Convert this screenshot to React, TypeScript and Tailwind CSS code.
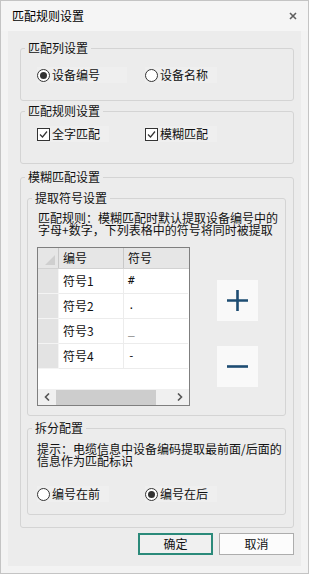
import * as React from "react";

const rows = [
  { name: "符号1", sym: "#" },
  { name: "符号2", sym: "." },
  { name: "符号3", sym: "_" },
  { name: "符号4", sym: "-" },
];

function Radio({ checked }: { checked?: boolean }) {
  return (
    <span className="flex size-[13px] shrink-0 items-center justify-center rounded-full border border-[#333] bg-white">
      {checked && <span className="size-[7px] rounded-full bg-[#333]" />}
    </span>
  );
}

function Check() {
  return (
    <span className="flex size-[13px] shrink-0 items-center justify-center border border-[#333] bg-white">
      <svg width="9" height="9" viewBox="0 0 9 9" fill="none">
        <path d="M1 4.5 L3.5 7 L8 1.5" stroke="#333" strokeWidth="1.2" />
      </svg>
    </span>
  );
}

function Legend({ children }: { children: React.ReactNode }) {
  return <legend className="ml-[4px] px-[3px] leading-[16px]">{children}</legend>;
}

function Option({ checked, box, w, children }: { checked?: boolean; box?: boolean; w: string; children: React.ReactNode }) {
  return (
    <span className={`flex items-center gap-[2px] bg-[#efefef] ${w}`}>
      {box ? <Check /> : <Radio checked={checked} />}
      <span className="leading-[16px]">{children}</span>
    </span>
  );
}

export default function App() {
  return (
    <div className="flex h-[574px] w-[309px] flex-col border border-[#c4c4c4] bg-[#f3f3f3] font-['Noto_Sans_CJK_SC',sans-serif] text-[12px] text-[#111]">
      {/* title bar */}
      <div className="flex h-[30px] shrink-0 items-center justify-between bg-[#f5f5f5] pl-[11px] pr-[11px]">
        <span className="leading-[16px] text-black">匹配规则设置</span>
        <svg width="8" height="8" viewBox="0 0 8 8">
          <path d="M1 1 L7 7 M7 1 L1 7" stroke="#5f5f5f" strokeWidth="1.6" />
        </svg>
      </div>

      <div className="flex flex-1 flex-col px-[7px] pb-[7px]">
        <div className="flex flex-1 flex-col bg-[#ececec] pl-[12px] pr-[7px] pt-[9px]">
          {/* 匹配列设置 */}
          <fieldset className="rounded-[3px] border border-[#d4d4d4] pb-[17px] pt-[11px]">
            <Legend>匹配列设置</Legend>
            <div className="flex h-[16px] items-center pl-[16px]">
              <div className="w-[108px]">
                <Option checked w="w-[90px]">设备编号</Option>
              </div>
              <Option w="w-[72px]">设备名称</Option>
            </div>
          </fieldset>

          {/* 匹配规则设置 */}
          <fieldset className="mt-[2px] rounded-[3px] border border-[#d4d4d4] pb-[21px] pt-[7px]">
            <Legend>匹配规则设置</Legend>
            <div className="flex h-[16px] items-center pl-[16px]">
              <div className="w-[108px]">
                <Option box w="w-[72px]">全字匹配</Option>
              </div>
              <Option box w="w-[72px]">模糊匹配</Option>
            </div>
          </fieldset>

          {/* 模糊匹配设置 */}
          <fieldset className="mt-[5px] rounded-[3px] border border-[#d4d4d4] pb-[12px] pt-[5px]">
            <Legend>模糊匹配设置</Legend>

            <div className="pl-[6px] pr-[7px]">
              <fieldset className="rounded-[3px] border border-[#d4d4d4] pb-[9px] pt-[6px]">
                <Legend>提取符号设置</Legend>
                <div className="pl-[9px]">
                  <p className="pl-[1px] leading-[12px]">
                    <span className="block">匹配规则：模糊匹配时默认提取设备编号中的</span>
                    <span className="block">字母+数字，下列表格中的符号将同时被提取</span>
                  </p>

                  <div className="mt-[11px] flex items-start">
                    {/* table */}
                    <div className="flex h-[159px] w-[153px] flex-col border border-[#7f7f7f] bg-white">
                      <div className="flex h-[21px] shrink-0 border-b border-[#d2d2d2] bg-[#e6e6e6]">
                        <div className="relative w-[21px] border-r border-[#c8c8c8]">
                          <svg className="absolute bottom-[3px] right-[3px]" width="10" height="10" viewBox="0 0 10 10">
                            <path d="M10 0 L10 10 L0 10 Z" fill="#cfcfcf" />
                          </svg>
                        </div>
                        <div className="flex w-[65px] items-center border-r border-[#c8c8c8] pl-[4px]">编号</div>
                        <div className="flex w-[64px] items-center pl-[4px]">符号</div>
                      </div>
                      {rows.map((r) => (
                        <div key={r.name} className="flex h-[25px] shrink-0">
                          <div className="w-[21px] border-b border-r border-[#f4f4f4] bg-[#e3e3e3]" />
                          <div className="flex w-[65px] items-center border-b border-r border-[#ececec] pl-[4px]">
                            {r.name}
                          </div>
                          <div className="flex w-[64px] items-center border-b border-[#ececec] pl-[4px] font-['DejaVu_Sans_Mono',monospace] text-[11px]">
                            {r.sym}
                          </div>
                        </div>
                      ))}
                      <div className="flex-1" />
                      <div className="flex h-[16px] shrink-0 items-center bg-[#f0f0f0]">
                        <div className="flex w-[18px] items-center justify-center">
                          <svg width="6" height="8" viewBox="0 0 6 8">
                            <path d="M5 0.5 L1.5 4 L5 7.5" stroke="#555" strokeWidth="1.6" fill="none" />
                          </svg>
                        </div>
                        <div className="h-[15px] w-[100px] bg-[#cdcdcd]" />
                        <div className="flex flex-1 items-center justify-end pr-[6px]">
                          <svg width="6" height="8" viewBox="0 0 6 8">
                            <path d="M1 0.5 L4.5 4 L1 7.5" stroke="#555" strokeWidth="1.6" fill="none" />
                          </svg>
                        </div>
                      </div>
                    </div>

                    {/* add / remove */}
                    <div className="ml-[27px] mt-[33px] flex flex-col gap-[25px]">
                      <button className="flex size-[41px] items-center justify-center bg-[#f9f9f9]">
                        <svg width="21" height="21" viewBox="0 0 21 21">
                          <path d="M0 10.5 H21 M10.5 0 V21" stroke="#1d4c72" strokeWidth="2.6" />
                        </svg>
                      </button>
                      <button className="flex size-[41px] items-center justify-center bg-[#f9f9f9]">
                        <svg width="21" height="21" viewBox="0 0 21 21">
                          <path d="M0 10.5 H21" stroke="#1d4c72" strokeWidth="2.6" />
                        </svg>
                      </button>
                    </div>
                  </div>
                </div>
              </fieldset>

              <fieldset className="mt-[4px] rounded-[3px] border border-[#d4d4d4] pb-[12px] pt-[7px]">
                <Legend>拆分配置</Legend>
                <div className="pl-[9px]">
                  <p className="leading-[12px]">
                    <span className="block">提示：电缆信息中设备编码提取最前面/后面的</span>
                    <span className="block">信息作为匹配标识</span>
                  </p>
                  <div className="mt-[19px] flex h-[16px] items-center">
                    <div className="w-[108px]">
                      <Option w="w-[72px]">编号在前</Option>
                    </div>
                    <Option checked w="w-[72px]">编号在后</Option>
                  </div>
                </div>
              </fieldset>
            </div>
          </fieldset>

          <div className="mt-[5px] flex justify-end gap-[6px]">
            <button className="h-[22px] w-[75px] border-2 border-[#2b8a7a] bg-[#f0f0f0] leading-[16px]">确定</button>
            <button className="h-[22px] w-[75px] border border-[#adadad] bg-[#fcfcfc] leading-[16px]">取消</button>
          </div>
        </div>
      </div>
    </div>
  );
}
